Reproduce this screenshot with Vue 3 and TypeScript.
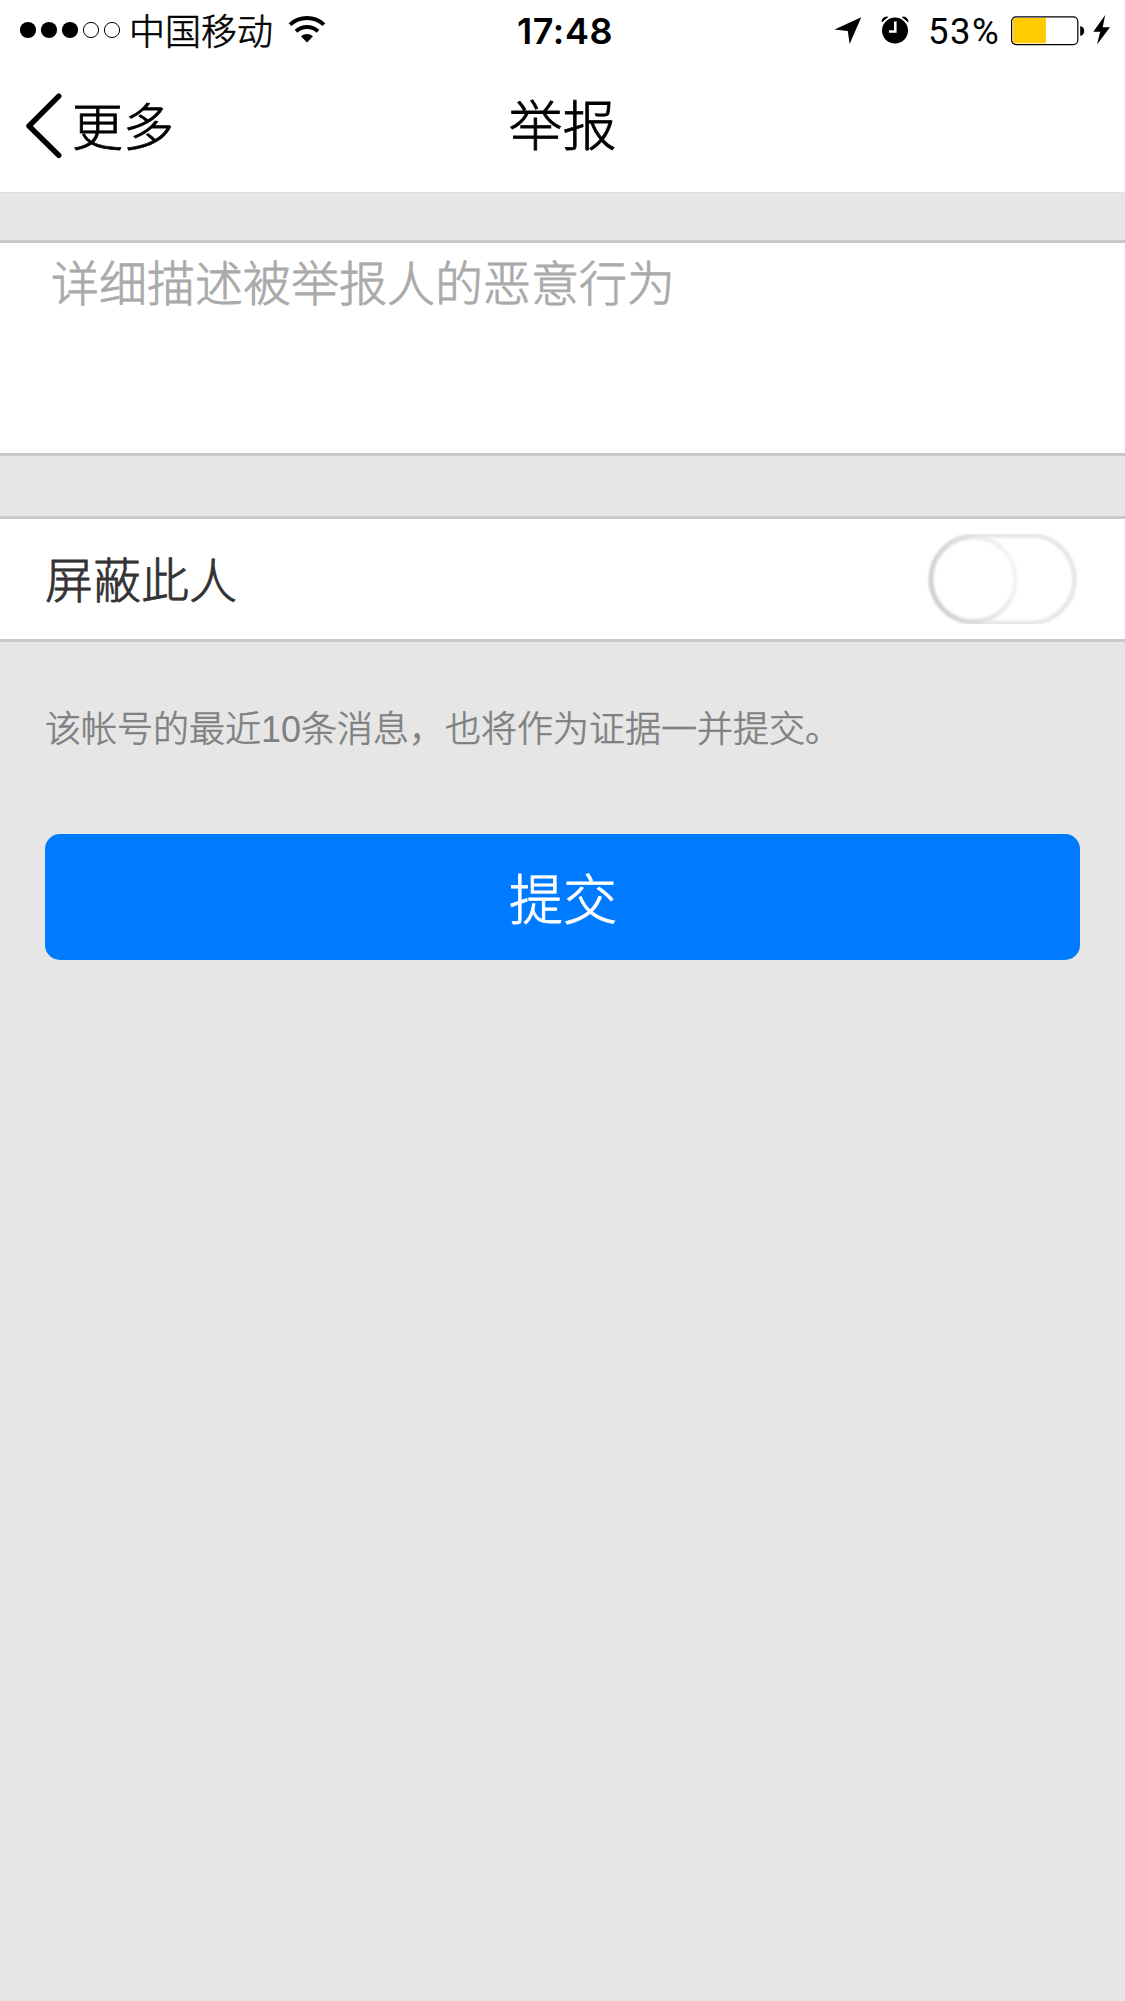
<script setup lang="ts">
import { ref } from 'vue'

const signal: boolean[] = [true, true, true, false, false]
const carrier = '中国移动'
const time = '17:48'
const battery = 53
const description = ref('')
const blocked = ref(false)
</script>

<template>
  <div class="page">
    <header class="header">
      <div class="status">
        <div class="status-left">
          <svg class="dots" width="102" height="18" viewBox="0 0 102 18">
            <circle
              v-for="(on, i) in signal"
              :key="i"
              :cx="9 + i * 21"
              cy="9"
              :r="on ? 8.1 : 7.6"
              :fill="on ? '#000' : 'none'"
              :stroke="on ? 'none' : '#000'"
              stroke-width="1"
            />
          </svg>
          <span class="carrier">{{ carrier }}</span>
          <svg class="wifi" width="38" height="28" viewBox="0 0 38 28">
            <g fill="none" stroke="#000" stroke-width="4">
              <path d="M2 9.6A25 25 0 0 1 36 9.6" />
              <path d="M8 16.2A16.5 16.5 0 0 1 30 16.2" />
            </g>
            <path d="M13 21.2A9.5 9.5 0 0 1 25 21.2L19 27.4Z" />
          </svg>
        </div>
        <span class="time">{{ time }}</span>
        <div class="status-right">
          <svg class="location" width="28" height="28" viewBox="0 0 28 28">
            <path d="M27.3 .2L15.6 27L13.8 13.9L.5 12.4Z" />
          </svg>
          <svg class="alarm" width="28" height="28" viewBox="0 0 28 28">
            <circle cx="14" cy="14.6" r="13" />
            <path d="M.4 5.2Q1.5 .4 6.5 .4L7 1.2L1.1 6.2ZM27.6 5.2Q26.5 .4 21.5 .4L21 1.2L26.9 6.2Z" />
            <path d="M14.3 5.5V15.5H8" fill="none" stroke="#fff" stroke-width="2.6" />
          </svg>
          <span class="percent">{{ battery }}%</span>
          <svg class="battery" width="75" height="30" viewBox="0 0 75 30">
            <rect x=".6" y=".8" width="66.2" height="27.8" rx="4.5" fill="#fff" stroke="#000" stroke-width="1.2" />
            <path :d="`M2 4Q2 2 4 2H${2 + battery * 0.62}V27.2H4Q2 27.2 2 25.2Z`" fill="#fc0" />
            <path d="M69.2 10Q73.2 11 73.2 15T69.2 20Z" />
          </svg>
          <svg class="bolt" width="18" height="30" viewBox="0 0 18 30">
            <path d="M12.2 0L.3 16.8H7.2L4 29.5L17 12.2H9.7Z" />
          </svg>
        </div>
      </div>
      <nav class="nav">
        <button class="back" type="button">
          <svg width="38" height="68" viewBox="0 0 38 68">
            <path d="M33.8 4.2L4 34L33.8 63.4" fill="none" stroke="#000" stroke-width="5.4" stroke-linecap="round" stroke-linejoin="round" />
          </svg>
          <span>更多</span>
        </button>
        <h1 class="title">举报</h1>
        <div class="side"></div>
      </nav>
    </header>

    <main>
      <section class="panel describe">
        <textarea v-model="description" placeholder="详细描述被举报人的恶意行为"></textarea>
      </section>
      <section class="panel block">
        <span class="label">屏蔽此人</span>
        <button class="switch" type="button" role="switch" :aria-checked="blocked" @click="blocked = !blocked">
          <svg width="152" height="90" viewBox="0 0 152 90">
            <defs>
              <filter id="soft" x="-20%" y="-20%" width="140%" height="140%">
                <feGaussianBlur stdDeviation="1.5" />
              </filter>
              <linearGradient id="edge" x1="0" y1=".65" x2="1" y2=".35">
                <stop offset="0" stop-color="#c8c8c8" />
                <stop offset=".5" stop-color="#dadada" />
                <stop offset="1" stop-color="#f3f3f3" />
              </linearGradient>
            </defs>
            <rect x="4.5" y="1.5" width="143" height="87.5" rx="43.7" fill="#fff" stroke="#e2e2e2" stroke-width="4" filter="url(#soft)" />
            <circle cx="46.3" cy="45.3" r="42.2" fill="#fff" stroke="url(#edge)" stroke-width="4" filter="url(#soft)" />
          </svg>
        </button>
      </section>
      <p class="note">该帐号的最近<span class="digits">10</span>条消息，也将作为证据一并提交。</p>
      <button class="submit" type="button"><span>提交</span></button>
    </main>
  </div>
</template>

<style>
body {
  margin: 0;
  background: #e6e6e6;
}
</style>

<style scoped>
.page {
  width: 1125px;
  min-height: 2001px;
  background: #e6e6e6;
  font-family: 'Liberation Sans', 'Noto Sans CJK SC', sans-serif;
  font-weight: 300;
  color: #000;
  -webkit-text-stroke-width: 0.8px;
}
button {
  border: 0;
  padding: 0;
  background: none;
  font: inherit;
  color: inherit;
}
svg {
  display: block;
  flex: none;
}
.header {
  height: 192px;
  background: #fff;
  box-shadow: 0 1px 0 #dedede;
}
.status {
  display: flex;
  height: 60px;
}
.status-left,
.status-right {
  display: flex;
  align-items: flex-start;
  flex: 1 1 0;
}
.status-left {
  padding-left: 19px;
}
.status-right {
  justify-content: flex-end;
  padding-right: 14px;
}
.dots {
  margin-top: 21px;
}
.carrier {
  margin: 7px 0 0 8px;
  font-size: 36px;
  line-height: 52px;
  -webkit-text-stroke-width: 0.6px;
}
.wifi {
  margin: 15px 0 0 15px;
}
.time {
  font-family: Inter, sans-serif;
  font-weight: 600;
  font-size: 36px;
  line-height: 63px;
  letter-spacing: 0.6px;
  -webkit-text-stroke-width: 0;
}
.location {
  margin-top: 17px;
}
.alarm {
  margin: 16px 0 0 19px;
}
.percent {
  width: 73px;
  margin-left: 19px;
  font-family: Roboto, sans-serif;
  font-weight: 400;
  font-size: 36.5px;
  line-height: 63px;
  letter-spacing: 1.5px;
  -webkit-text-stroke-width: 0;
}
.battery {
  margin: 16px 0 0 10px;
}
.bolt {
  margin: 15px 0 0 7px;
}
.nav {
  display: flex;
  align-items: center;
  height: 132px;
}
.back,
.side {
  flex: 1 1 0;
  box-sizing: border-box;
  padding-left: 25px;
}
.side {
  padding: 0 25px 0 0;
}
.back {
  display: flex;
  align-items: center;
  font-size: 51px;
  line-height: 72px;
}
.back span {
  margin: 6px 0 0 9px;
}
.title {
  margin: 1px 0 0;
  font-size: 54px;
  font-weight: 300;
  line-height: 78px;
}
.panel {
  background: #fff;
  border-top: 3px solid #c8c8ca;
  border-bottom: 3px solid #c8c8ca;
}
.describe {
  margin-top: 48px;
  height: 210px;
}
textarea {
  display: block;
  box-sizing: border-box;
  width: 100%;
  height: 210px;
  padding: 7px 51px;
  border: 0;
  outline: 0;
  resize: none;
  background: transparent;
  font: inherit;
  font-size: 48px;
  line-height: 70px;
}
textarea::placeholder {
  color: #aaa;
}
.block {
  display: flex;
  align-items: center;
  justify-content: space-between;
  margin-top: 60px;
  height: 120px;
  padding: 0 46px 0 45px;
}
.label {
  margin-top: 6px;
  font-size: 48px;
  line-height: 70px;
  color: #333;
}
.note {
  margin: 0 45px;
  padding-top: 62px;
  font-size: 36px;
  line-height: 52px;
  color: #808080;
  -webkit-text-stroke-width: 0.6px;
}
.digits {
  -webkit-text-stroke-width: 0;
  font-weight: 400;
}
.submit {
  display: block;
  width: 1035px;
  height: 126px;
  margin: 78px auto 0;
  border-radius: 15px;
  background: #007aff;
  color: #fff;
  font-size: 54px;
  line-height: 78px;
}
.submit span {
  display: block;
  padding: 7px 0 0 1px;
}
</style>
